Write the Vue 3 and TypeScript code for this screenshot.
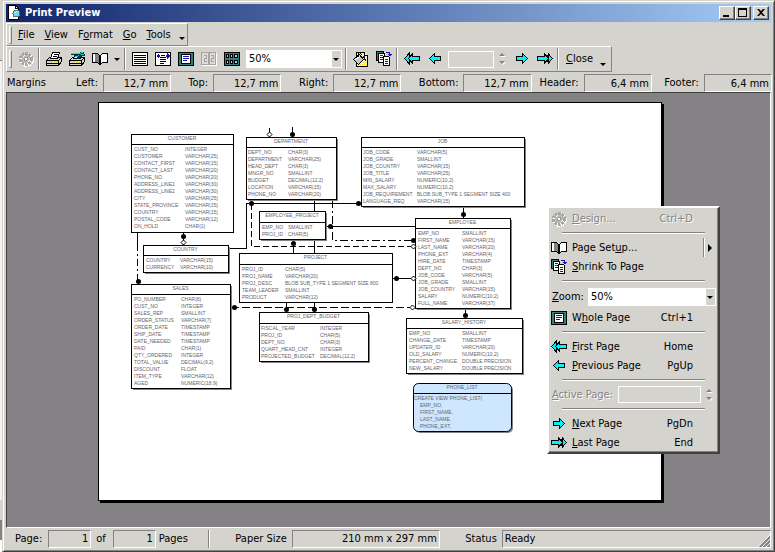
<script setup lang="ts">
import { ref } from 'vue'

type Row = [string, string?]
interface Entity {
  name: string
  x: number
  y: number
  w: number
  h: number
  head: number
  c1: number
  c2: number
  rows: Row[]
  view?: boolean
  shadow?: boolean
}

const zoom = ref('50%')
const zoomLevels = ['25%', '50%', '75%', '100%', '200%']

const margins = ref([
  { id: 'left', label: 'Left:', value: '12,7 mm' },
  { id: 'top', label: 'Top:', value: '12,7 mm' },
  { id: 'right', label: 'Right:', value: '12,7 mm' },
  { id: 'bottom', label: 'Bottom:', value: '12,7 mm' },
  { id: 'header', label: 'Header:', value: '6,4 mm' },
  { id: 'footer', label: 'Footer:', value: '6,4 mm' },
])

const menus = [
  ['', 'F', 'ile'],
  ['', 'V', 'iew'],
  ['F', 'o', 'rmat'],
  ['', 'G', 'o'],
  ['', 'T', 'ools'],
]

const viewTools = [
  { icon: 'lines', label: 'Actual size' },
  { icon: 'fit', label: 'Page width' },
  { icon: 'whole', label: 'Whole page' },
  { icon: 'two', label: 'Two pages', off: true },
  { icon: 'multi', label: 'Many pages' },
]

const entities: Entity[] = [
  {
    name: 'CUSTOMER', x: 131, y: 134, w: 102, h: 98, head: 10, c1: 134, c2: 185,
    rows: [['CUST_NO', 'INTEGER'], ['CUSTOMER', 'VARCHAR(25)'], ['CONTACT_FIRST', 'VARCHAR(15)'], ['CONTACT_LAST', 'VARCHAR(20)'], ['PHONE_NO', 'VARCHAR(20)'], ['ADDRESS_LINE1', 'VARCHAR(30)'], ['ADDRESS_LINE2', 'VARCHAR(30)'], ['CITY', 'VARCHAR(25)'], ['STATE_PROVINCE', 'VARCHAR(15)'], ['COUNTRY', 'VARCHAR(15)'], ['POSTAL_CODE', 'VARCHAR(12)'], ['ON_HOLD', 'CHAR(1)']],
  },
  {
    name: 'DEPARTMENT', x: 246, y: 137, w: 90, h: 62, head: 10, c1: 248, c2: 288, shadow: true,
    rows: [['DEPT_NO', 'CHAR(3)'], ['DEPARTMENT', 'VARCHAR(25)'], ['HEAD_DEPT', 'CHAR(3)'], ['MNGR_NO', 'SMALLINT'], ['BUDGET', 'DECIMAL(12,2)'], ['LOCATION', 'VARCHAR(15)'], ['PHONE_NO', 'VARCHAR(20)']],
  },
  {
    name: 'JOB', x: 361, y: 137, w: 163, h: 69, head: 10, c1: 363, c2: 417, shadow: true,
    rows: [['JOB_CODE', 'VARCHAR(5)'], ['JOB_GRADE', 'SMALLINT'], ['JOB_COUNTRY', 'VARCHAR(15)'], ['JOB_TITLE', 'VARCHAR(25)'], ['MIN_SALARY', 'NUMERIC(10,2)'], ['MAX_SALARY', 'NUMERIC(10,2)'], ['JOB_REQUIREMENT', 'BLOB SUB_TYPE 1 SEGMENT SIZE 400'], ['LANGUAGE_REQ', 'VARCHAR(15)']],
  },
  {
    name: 'EMPLOYEE_PROJECT', x: 259, y: 211, w: 66, h: 28, head: 11, c1: 262, c2: 288, shadow: true,
    rows: [['EMP_NO', 'SMALLINT'], ['PROJ_ID', 'CHAR(5)']],
  },
  {
    name: 'COUNTRY', x: 143, y: 245, w: 85, h: 27, head: 10, c1: 146, c2: 180, shadow: true,
    rows: [['COUNTRY', 'VARCHAR(15)'], ['CURRENCY', 'VARCHAR(10)']],
  },
  {
    name: 'SALES', x: 131, y: 284, w: 99, h: 104, head: 10, c1: 134, c2: 181, shadow: true,
    rows: [['PO_NUMBER', 'CHAR(8)'], ['CUST_NO', 'INTEGER'], ['SALES_REP', 'SMALLINT'], ['ORDER_STATUS', 'VARCHAR(7)'], ['ORDER_DATE', 'TIMESTAMP'], ['SHIP_DATE', 'TIMESTAMP'], ['DATE_NEEDED', 'TIMESTAMP'], ['PAID', 'CHAR(1)'], ['QTY_ORDERED', 'INTEGER'], ['TOTAL_VALUE', 'DECIMAL(9,2)'], ['DISCOUNT', 'FLOAT'], ['ITEM_TYPE', 'VARCHAR(12)'], ['AGED', 'NUMERIC(18,9)']],
  },
  {
    name: 'PROJECT', x: 239, y: 253, w: 153, h: 49, head: 11, c1: 242, c2: 285,
    rows: [['PROJ_ID', 'CHAR(5)'], ['PROJ_NAME', 'VARCHAR(20)'], ['PROJ_DESC', 'BLOB SUB_TYPE 1 SEGMENT SIZE 800'], ['TEAM_LEADER', 'SMALLINT'], ['PRODUCT', 'VARCHAR(12)']],
  },
  {
    name: 'PROJ_DEPT_BUDGET', x: 259, y: 312, w: 109, h: 49, head: 11, c1: 261, c2: 320, shadow: true,
    rows: [['FISCAL_YEAR', 'INTEGER'], ['PROJ_ID', 'CHAR(5)'], ['DEPT_NO', 'CHAR(3)'], ['QUART_HEAD_CNT', 'INTEGER'], ['PROJECTED_BUDGET', 'DECIMAL(12,2)']],
  },
  {
    name: 'EMPLOYEE', x: 415, y: 218, w: 95, h: 90, head: 10, c1: 418, c2: 462, shadow: true,
    rows: [['EMP_NO', 'SMALLINT'], ['FIRST_NAME', 'VARCHAR(15)'], ['LAST_NAME', 'VARCHAR(20)'], ['PHONE_EXT', 'VARCHAR(4)'], ['HIRE_DATE', 'TIMESTAMP'], ['DEPT_NO', 'CHAR(3)'], ['JOB_CODE', 'VARCHAR(5)'], ['JOB_GRADE', 'SMALLINT'], ['JOB_COUNTRY', 'VARCHAR(15)'], ['SALARY', 'NUMERIC(10,2)'], ['FULL_NAME', 'VARCHAR(37)']],
  },
  {
    name: 'SALARY_HISTORY', x: 406, y: 318, w: 116, h: 55, head: 10, c1: 409, c2: 462, shadow: true,
    rows: [['EMP_NO', 'SMALLINT'], ['CHANGE_DATE', 'TIMESTAMP'], ['UPDATER_ID', 'VARCHAR(20)'], ['OLD_SALARY', 'NUMERIC(10,2)'], ['PERCENT_CHANGE', 'DOUBLE PRECISION'], ['NEW_SALARY', 'DOUBLE PRECISION']],
  },
  {
    name: 'PHONE_LIST', x: 413, y: 383, w: 98, h: 48, head: 10, c1: 414, c2: 420, view: true, shadow: true,
    rows: [['CREATE VIEW PHONE_LIST('], ['', 'EMP_NO,'], ['', 'FIRST_NAME,'], ['', 'LAST_NAME,'], ['', 'PHONE_EXT,']],
  },
]

const links: { d: string; dash?: string }[] = [
  { d: 'M269.5 128V138' },
  { d: 'M292.5 127V138' },
  { d: 'M183.5 233V246' },
  { d: 'M137.5 233V244' },
  { d: 'M137.5 244V284', dash: '7 3 2 3' },
  { d: 'M229 248.5H246.5V203.5H361' },
  { d: 'M251.5 204V246.5H412', dash: '6 3' },
  { d: 'M332.5 200V240.5H412', dash: '8 3 2 3' },
  { d: 'M314.5 200V312' },
  { d: 'M326 226.5H415' },
  { d: 'M293.5 239V253' },
  { d: 'M286.5 302V312' },
  { d: 'M463.5 207V218' },
  { d: 'M393 278.5H412' },
  { d: 'M231 307.5H411', dash: '8 3' },
  { d: 'M465.5 309V318' },
]
const dots = [[292, 134], [183, 236], [138, 281], [251, 203], [358, 203], [413, 240], [330, 226], [293, 243], [286, 309], [314, 309], [463, 214], [396, 278], [234, 307], [465, 315]]
const diamonds = [[269, 134], [183, 242], [413, 246], [413, 278], [412, 307]]
</script>

<template>
  <div class="desktop">
    <svg class="defs" aria-hidden="true">
      <symbol id="i-app" viewBox="0 0 16 16">
        <path d="M1.500 .5h7l3 3v11h-10z" fill="#fff" stroke="#000" />
        <path d="M8.500 .5v3h3" fill="none" stroke="#000" />
        <circle cx="9.500" cy="8.500" r="3.500" fill="#6fd8e6" stroke="#5d6b78" />
        <path d="M12 11.500l3 3.500" stroke="#27313b" stroke-width="2" />
        <path d="M8 7.500l2-1" stroke="#fff" />
      </symbol>
      <symbol id="i-gear" viewBox="0 0 16 16">
        <circle cx="9" cy="9" r="5" fill="none" stroke="#fff" stroke-width="4" stroke-dasharray="3 1" />
        <circle cx="8" cy="8" r="5.500" fill="none" stroke="#a9a7a6" stroke-width="3" stroke-dasharray="2.500 1" />
        <circle cx="8" cy="8" r="4.500" fill="#bdbbb8" stroke="#a5a3a3" stroke-dasharray="2 1" />
        <circle cx="8" cy="8" r="1.500" fill="#fff" stroke="#96949a" />
        <path d="M5 6l2-2M10 11l2-2" stroke="#fff" />
      </symbol>
      <symbol id="i-printer" viewBox="0 0 16 16">
        <path d="M4.500 8l2-6.500h7L11.500 8z" fill="#fff" stroke="#000" />
        <path d="M7.500 3.500h4M7 5.500h4" stroke="#000" />
        <path d="M.5 9.500l3-3h1v1h7v-1h4v4l-3 4H.5z" fill="#d5d3ce" stroke="#000" />
        <path d="M1 9.500h11.500v5M12.500 9.500l3-3M1 12.500h11" fill="none" stroke="#000" />
        <path d="M7 11.500h4" stroke="#efe73a" />
      </symbol>
      <symbol id="i-printset" viewBox="0 0 16 16">
        <path d="M4.500 8l2-5.500h7L11.500 8z" fill="#fff" stroke="#000" />
        <path d="M.5 9.500l3-3h1v1h7v-1h4v4l-3 4H.5z" fill="#d5d3ce" stroke="#000" />
        <path d="M1 9.500h11.500v5M12.500 9.500l3-3M1 12.500h11" fill="none" stroke="#000" />
        <path d="M7 11.500h4" stroke="#efe73a" />
        <path d="M2 2.500h9M11 1.500h4M11 3.500h5M5 4.500h7l-4 3" fill="none" stroke="#00393c" stroke-width="2" />
        <path d="M2 2.500h10M12 1.500h2M12 3.500h3M10 4.500l-5 2" fill="none" stroke="#00e5ea" />
      </symbol>
      <symbol id="i-book" viewBox="0 0 16 16">
        <path d="M.5 2.500h5l2 2v9l-2-2h-5z" fill="#848284" stroke="#000" />
        <path d="M2 3v8" stroke="#fff" stroke-width="2" />
        <path d="M8.500 4.500l2-2h5v9h-5l-2 2z" fill="#fff" stroke="#000" />
        <path d="M7.500 4v9" stroke="#000" />
      </symbol>
      <symbol id="i-lines" viewBox="0 0 16 16">
        <path d="M.5 1.500h15v13H.5z" fill="#fff" stroke="#000" />
        <path d="M2 4.500h12M2 6.500h12M2 8.500h12M2 10.500h12M2 12.500h12" stroke="#000" />
      </symbol>
      <symbol id="i-fit" viewBox="0 0 16 16">
        <path d="M.5 1.500h15v13H.5z" fill="#fff" stroke="#000" />
        <path d="M6 4.500h4M5 6.500h6M5 8.500h6M5 10.500h6M5 12.500h4" stroke="#000" />
        <path d="M1 5l3-3v2h1v2H4v2zM15 5l-3-3v2h-1v2h1v2z" fill="#1414b8" />
      </symbol>
      <symbol id="i-whole" viewBox="0 0 16 16">
        <path d="M.5 1.500h15v13H.5z" fill="#2f7f7f" stroke="#000" />
        <path d="M3.500 3.500h9v9h-9z" fill="#fff" stroke="#000" />
        <path d="M5 5.500h6M5 7.500h6M5 9.500h4" stroke="#1414b8" />
      </symbol>
      <symbol id="i-two" viewBox="0 0 16 16">
        <path d="M1.500 2.500h14v12h-14z" fill="none" stroke="#fff" />
        <path d="M.5 1.500h7v12h-7zM8.500 1.500h6v12h-6z" fill="#dddbd7" stroke="#a5a3a3" />
        <path d="M3 4.500h2.500v3H3.500v3H6M10 4.500h2.500v3h-2v3H13" fill="none" stroke="#a5a3a3" />
      </symbol>
      <symbol id="i-multi" viewBox="0 0 16 16">
        <path d="M.5 1.500h15v13H.5z" fill="#2f7f7f" stroke="#000" />
        <path d="M2.500 3.500h2v3h-2zM6.500 3.500h2v3h-2zM10.500 3.500h3v3h-3zM2.500 9.500h2v3h-2zM6.500 9.500h2v3h-2zM10.500 9.500h3v3h-3z" fill="#a9cfcf" stroke="#000" />
      </symbol>
      <symbol id="i-paint" viewBox="0 0 16 16">
        <path d="M3.500 1.500h8l3 3v11h-11z" fill="#fdf7a0" stroke="#000" />
        <path d="M9 13.500h5M10 11.500h4M5 13.500h6" stroke="#f3dc1c" stroke-dasharray="1 1" />
        <path d="M11.500 1.500v3h3" fill="#fff" stroke="#000" />
        <path d="M.5 8.500l6-5 4 5-5 5z" fill="#c9c7c6" stroke="#000" />
        <path d="M2 9l5-4" stroke="#fff" />
        <path d="M5.500 6V1.500h2l1 3" fill="none" stroke="#000" />
        <path d="M9 4.500c3 0 4 2 3.500 6l-2-3z" fill="#14148c" />
      </symbol>
      <symbol id="i-shrink" viewBox="0 0 16 16">
        <path d="M.5 .5h7v9h-7z" fill="#2f7f7f" stroke="#000" />
        <path d="M2.500 2.500h6v9h-6z" fill="#fff" stroke="#000" />
        <path d="M4 4.500h3M4 6.500h3M4 8.500h3" stroke="#1414b8" />
        <path d="M7.500 5.500h5l1 1v8h-6z" fill="#fff" stroke="#000" />
        <path d="M9 8.500h3M9 10.500h3M9 12.500h3" stroke="#1414b8" />
        <path d="M10 1.500h3l1 2M12 3.500h4M13 4.500h2" fill="none" stroke="#1414b8" />
      </symbol>
      <symbol id="i-prev" viewBox="0 0 16 16">
        <path d="M2.500 7.500l5-5v3h6v4h-6v3z" fill="#00f5f8" stroke="#000" />
      </symbol>
      <symbol id="i-first" viewBox="0 0 16 16">
        <path d="M.5 7.500l4.500-5v3l3.500-3v3h7v4h-7v3L5 9.500v3z" fill="#00f5f8" stroke="#000" />
        <path d="M8.500 3l-4 4.500 4 4.500" fill="none" stroke="#000" />
      </symbol>
      <symbol id="i-next" viewBox="0 0 16 16">
        <path d="M13.500 7.500l-5-5v3h-6v4h6v3z" fill="#00f5f8" stroke="#000" />
      </symbol>
      <symbol id="i-last" viewBox="0 0 16 16">
        <path d="M15.500 7.500l-4.500-5v3l-3.500-3v3h-7v4h7v3L11 9.500v3z" fill="#00f5f8" stroke="#000" />
        <path d="M7.500 3l4 4.500-4 4.500" fill="none" stroke="#000" />
      </symbol>
      <symbol id="i-spin" viewBox="0 0 7 14">
        <path d="M1 5h6l-3-3zM1 10h6l-3 3z" fill="#fff" />
        <path d="M0 4h6L3 1zM0 9h6l-3 3z" fill="#848284" />
      </symbol>
    </svg>

    <div class="behind"></div>

    <main class="window">
      <header class="titlebar">
        <svg class="icon"><use href="#i-app" /></svg>
        <h1>Print Preview</h1>
        <div class="winbtns">
          <button type="button" aria-label="Minimize">
            <svg viewBox="0 0 12 10"><path d="M2 7h6v2H2z" /></svg>
          </button>
          <button type="button" aria-label="Maximize">
            <svg viewBox="0 0 12 10"><path d="M1 0h9v9H1zM2 2v6h7V2z" fill-rule="evenodd" /></svg>
          </button>
          <button type="button" aria-label="Close window" class="x">
            <svg viewBox="0 0 12 10"><path d="M2 1h2l2 2 2-2h2L7 4.500 10 8H8L6 6 4 8H2l3-3.500z" /></svg>
          </button>
        </div>
      </header>

      <nav class="bar menubar">
        <i class="grip"></i>
        <button v-for="m in menus" :key="m.join('')" type="button" class="menu">{{ m[0] }}<u>{{ m[1] }}</u>{{ m[2] }}</button>
        <i class="tri more"></i>
      </nav>

      <div class="bar toolbar">
        <i class="grip"></i>
        <button type="button" class="tool" aria-label="Design" disabled><svg class="icon"><use href="#i-gear" /></svg></button>
        <i class="sep"></i>
        <button type="button" class="tool" aria-label="Print"><svg class="icon"><use href="#i-printer" /></svg></button>
        <button type="button" class="tool" aria-label="Print setup"><svg class="icon"><use href="#i-printset" /></svg></button>
        <button type="button" class="tool" aria-label="Page setup"><svg class="icon"><use href="#i-book" /></svg></button>
        <button type="button" class="drop" aria-label="Page setup options"><i class="tri"></i></button>
        <i class="sep"></i>
        <button v-for="t in viewTools" :key="t.icon" type="button" class="tool" :aria-label="t.label" :disabled="t.off">
          <svg class="icon"><use :href="'#i-' + t.icon" /></svg>
        </button>
        <span class="combo">
          <select v-model="zoom" aria-label="Zoom">
            <option v-for="z in zoomLevels" :key="z">{{ z }}</option>
          </select>
        </span>
        <i class="sep"></i>
        <button type="button" class="tool" aria-label="Background"><svg class="icon"><use href="#i-paint" /></svg></button>
        <button type="button" class="tool" aria-label="Shrink to page"><svg class="icon"><use href="#i-shrink" /></svg></button>
        <i class="sep"></i>
        <button type="button" class="tool" aria-label="First page"><svg class="icon"><use href="#i-first" /></svg></button>
        <button type="button" class="tool" aria-label="Previous page"><svg class="icon"><use href="#i-prev" /></svg></button>
        <input class="pagebox" aria-label="Active page" disabled />
        <svg class="spin"><use href="#i-spin" /></svg>
        <button type="button" class="tool" aria-label="Next page"><svg class="icon"><use href="#i-next" /></svg></button>
        <button type="button" class="tool" aria-label="Last page"><svg class="icon"><use href="#i-last" /></svg></button>
        <i class="sep"></i>
        <button type="button" class="closebtn"><u>C</u>lose</button>
        <i class="tri more"></i>
      </div>

      <div class="margins">
        <span class="caption">Margins</span>
        <template v-for="m in margins" :key="m.id">
          <label :for="m.id">{{ m.label }}</label>
          <input :id="m.id" v-model="m.value" class="sunk" />
        </template>
      </div>

      <section class="workspace">
        <div class="page">
          <svg class="diagram" viewBox="99 103 562 397" role="img" aria-label="Database diagram">
            <path v-for="l in links" :key="l.d" :d="l.d" class="link" :stroke-dasharray="l.dash" />
            <g v-for="e in entities" :key="e.name">
              <rect v-if="e.shadow" :x="e.x + 2" :y="e.y + 2" :width="e.w" :height="e.h" :rx="e.view ? 5 : 0" class="shade" />
              <rect :x="e.x + 0.5" :y="e.y + 0.5" :width="e.w" :height="e.h" :rx="e.view ? 5 : 0" class="box" :class="{ view: e.view }" />
              <path :d="`M${e.x} ${e.y + e.head + 0.5}h${e.w}`" class="link" />
              <text :x="e.x + e.w / 2" :y="e.y + 6" text-anchor="middle">{{ e.name }}</text>
              <template v-for="(r, i) in e.rows" :key="i">
                <text v-if="r[0]" :x="e.c1" :y="e.y + e.head + 7 + i * 7">{{ r[0] }}</text>
                <text v-if="r[1]" :x="e.c2" :y="e.y + e.head + 7 + i * 7">{{ r[1] }}</text>
              </template>
            </g>
            <circle v-for="d in dots" :key="d.join()" :cx="d[0] + 0.5" :cy="d[1] + 0.5" r="2.500" />
            <path v-for="d in diamonds" :key="d.join()" :d="`M${d[0] - 2} ${d[1] + 0.5}l2.500-2.500 2.500 2.500-2.500 2.500z`" class="diamond" />
          </svg>
        </div>
      </section>

      <footer class="status">
        <label for="pg">Page:</label>
        <output id="pg" class="sunk num">1</output>
        <span>of</span>
        <output class="sunk num total">1</output>
        <span class="pages">Pages</span>
        <i class="sep"></i>
        <label for="paper" class="paper">Paper Size</label>
        <output id="paper" class="sunk size">210 mm x 297 mm</output>
        <label for="state" class="state">Status</label>
        <output id="state" class="sunk ready">Ready
          <svg class="sizer" viewBox="0 0 12 12"><path d="M0 12L12 0M4 12l8-8M8 12l4-4" stroke="#fff" /><path d="M1.500 12.500l11-11M5.500 12.500l8-8M9.500 12.500l4-4" stroke="#848284" stroke-width="2" /></svg>
        </output>
      </footer>

      <div class="popup">
        <button type="button" class="item" disabled><svg class="icon"><use href="#i-gear" /></svg><span><u>D</u>esign...</span><kbd>Ctrl+D</kbd></button>
        <hr />
        <button type="button" class="item sub"><svg class="icon"><use href="#i-book" /></svg><span>Page Set<u>u</u>p...</span><i class="go"></i></button>
        <button type="button" class="item"><svg class="icon"><use href="#i-shrink" /></svg><span><u>S</u>hrink To Page</span></button>
        <hr />
        <div class="row zoomrow">
          <label for="mzoom"><u>Z</u>oom:</label>
          <span class="combo">
            <select id="mzoom" v-model="zoom">
              <option v-for="z in zoomLevels" :key="z">{{ z }}</option>
            </select>
          </span>
        </div>
        <button type="button" class="item"><svg class="icon"><use href="#i-whole" /></svg><span>W<u>h</u>ole Page</span><kbd>Ctrl+1</kbd></button>
        <hr />
        <button type="button" class="item"><svg class="icon"><use href="#i-first" /></svg><span><u>F</u>irst Page</span><kbd>Home</kbd></button>
        <button type="button" class="item"><svg class="icon"><use href="#i-prev" /></svg><span><u>P</u>revious Page</span><kbd>PgUp</kbd></button>
        <hr />
        <div class="row">
          <label for="active" class="off"><u>A</u>ctive Page:</label>
          <input id="active" class="pagebox" disabled />
          <svg class="spin"><use href="#i-spin" /></svg>
        </div>
        <hr />
        <button type="button" class="item"><svg class="icon"><use href="#i-next" /></svg><span><u>N</u>ext Page</span><kbd>PgDn</kbd></button>
        <button type="button" class="item"><svg class="icon"><use href="#i-last" /></svg><span><u>L</u>ast Page</span><kbd>End</kbd></button>
      </div>
    </main>
  </div>
</template>

<style>
body {
  background: #d5d3ce;
}
</style>

<style scoped>
.desktop,
.desktop * {
  box-sizing: border-box;
}
.desktop {
  min-height: 100vh;
  display: flex;
  color: #000;
  font: 11px/14px "DejaVu Sans Condensed", "Liberation Sans", sans-serif;
}
button,
input,
select,
kbd,
h1 {
  font: inherit;
  color: inherit;
  margin: 0;
  padding: 0;
  border: 0;
  border-radius: 0;
  background: none;
}
svg {
  display: block;
}
u {
  text-underline-offset: 1px;
}
.defs {
  position: absolute;
  width: 0;
  height: 0;
}
.behind {
  width: 2px;
  background: linear-gradient(#d5d3ce 60px, #848284 60px, #848284 61px, #f4f3f1 61px, #f4f3f1 500px, #d5d3ce 500px, #d5d3ce 520px, #848284 520px, #848284 540px, #fff 540px);
}
.window {
  position: relative;
  flex: 1;
  min-width: 0;
  display: flex;
  flex-direction: column;
  padding: 2px;
  background: #d5d3ce;
  border: 1px solid #424142;
  border-left-color: #d5d3ce;
  border-top-color: #d5d3ce;
  box-shadow: inset 1px 1px #fff, inset -1px -1px #848284;
}
.icon {
  width: 16px;
  height: 16px;
  flex: none;
  shape-rendering: crispEdges;
}

.titlebar {
  height: 18px;
  margin: 1px;
  padding: 0 2px 0 1px;
  display: flex;
  align-items: center;
  gap: 2px;
  color: #fff;
  background: linear-gradient(90deg, #10246b, #a5cbf7);
}
.titlebar h1 {
  flex: 1;
  font-weight: bold;
}
.winbtns {
  display: flex;
}
.winbtns button {
  width: 16px;
  height: 14px;
  padding: 1px;
  background: #d5d3ce;
  border: 1px solid;
  border-color: #fff #424142 #424142 #fff;
  box-shadow: inset -1px -1px #848284;
}
.winbtns .x {
  margin-left: 2px;
}
.winbtns svg {
  width: 12px;
  height: 10px;
}

.bar {
  align-self: flex-start;
  display: flex;
  align-items: center;
  margin-left: 1px;
  padding-left: 2px;
  border: 1px solid;
  border-color: #fff #848284 #848284 #fff;
}
.menubar {
  height: 23px;
  padding-top: 1px;
}
.toolbar {
  height: 26px;
  padding-right: 3px;
}
.grip {
  width: 3px;
  height: 18px;
  margin-right: 2px;
  border: 1px solid;
  border-color: #fff #848284 #848284 #fff;
}
.menubar .grip {
  margin-right: 1px;
}
.menu {
  padding: 0 5px;
}
.tri {
  border: 3px solid transparent;
  border-top-color: #000;
  border-bottom: 0;
}
.more {
  align-self: flex-end;
  margin: 0 2px 5px 3px;
}
.tool {
  width: 23px;
  height: 22px;
  display: flex;
  align-items: center;
  justify-content: center;
}
.drop {
  width: 12px;
  height: 22px;
  display: flex;
  align-items: center;
  justify-content: center;
}
.sep {
  width: 2px;
  height: 22px;
  margin: 0 2px 0 1px;
  background: linear-gradient(90deg, #848284 50%, #fff 50%);
}
.combo {
  position: relative;
  display: flex;
  width: 96px;
  height: 18px;
  margin: 0 2px 0 3px;
  background: #fff;
  border: 1px solid #fff;
}
.combo select {
  appearance: none;
  flex: 1;
  width: 100%;
  padding: 0 12px 0 2px;
  outline: 0;
}
.combo::before {
  content: "";
  position: absolute;
  inset: 0 0 0 auto;
  width: 9px;
  background: #d5d3ce;
  pointer-events: none;
}
.combo::after {
  content: "";
  position: absolute;
  right: 2px;
  top: 7px;
  border: 3px solid transparent;
  border-top-color: #000;
  border-bottom: 0;
  pointer-events: none;
}
.pagebox {
  width: 46px;
  height: 17px;
  margin-left: 2px;
  border: 1px solid #fff;
}
.spin {
  width: 7px;
  height: 14px;
  margin: 0 4px 0 5px;
}
.closebtn {
  padding: 0 4px 0 5px;
}

.margins {
  display: grid;
  grid-template-columns: 57px 40px minmax(0, 1fr) 42px minmax(0, 1fr) 52px minmax(0, 1fr) 62px minmax(0, 1fr) 52px minmax(0, 1fr) 52px minmax(0, 1fr);
  align-items: center;
  margin: 2px 0 0 1px;
}
.caption {
  padding-left: 1px;
}
.margins label {
  text-align: right;
  padding-right: 5px;
}
.sunk {
  min-width: 0;
  width: 100%;
  height: 18px;
  padding: 1px 2px 0 2px;
  text-align: right;
  border: 1px solid;
  border-color: #848284 #fff #fff #848284;
}

.workspace {
  flex: 1;
  display: flex;
  align-items: flex-start;
  margin: 0 1px;
  padding: 9px 20px 24px 91px;
  overflow: hidden;
  background: #848284;
  border: 1px solid;
  border-color: #424142 #fff #fff #424142;
}
.page {
  flex: none;
  background: #fff;
  border: 1px solid #000;
  box-shadow: 2px 2px #000;
}
.diagram {
  width: 562px;
  height: 397px;
  font: 5px "Liberation Sans", sans-serif;
}
.diagram text {
  fill: #66646a;
}
.link {
  fill: none;
  stroke: #000;
  shape-rendering: crispEdges;
}
.box {
  fill: #fff;
  stroke: #000;
}
.view {
  fill: #cee7ff;
}
.shade {
  fill: #848284;
}
.diamond {
  fill: #fff;
  stroke: #000;
}

.status {
  display: flex;
  align-items: center;
  margin: 2px 1px 1px 0;
  padding-left: 10px;
}
.status .sunk {
  display: block;
}
.status .num {
  flex: none;
  width: 43px;
  margin: 0 5px 0 6px;
}
.status .total {
  margin: 0 3px 0 7px;
}
.status .pages {
  width: 49px;
}
.status .sep {
  height: 18px;
  margin: 0;
}
.status .paper {
  width: 82px;
  padding-right: 5px;
  text-align: right;
}
.status .size {
  flex: none;
  width: 148px;
}
.status .state {
  width: 62px;
  flex: none;
  padding-right: 5px;
  text-align: right;
}
.status .ready {
  flex: 1;
  position: relative;
  padding: 1px 2px 0;
  text-align: left;
}
.sizer {
  position: absolute;
  right: 0;
  bottom: 0;
  width: 12px;
  height: 12px;
}

.popup {
  position: absolute;
  left: 544px;
  top: 205px;
  width: 173px;
  padding: 1px 1px 0;
  background: #d5d3ce;
  border: 2px solid;
  border-color: #fff #424142 #424142 #fff;
  box-shadow: inset -1px -1px #848284;
}
.item {
  display: flex;
  align-items: center;
  width: 100%;
  height: 19px;
  padding: 0 24px 0 1px;
  text-align: left;
}
.item .icon {
  margin-right: 5px;
}
.item kbd {
  margin-left: auto;
}
.item:disabled,
.off {
  color: #848284;
  text-shadow: 1px 1px #fff;
}
.sub {
  padding-right: 5px;
}
.go {
  display: flex;
  align-items: center;
  height: 19px;
  margin-left: auto;
  padding-left: 4px;
  border-left: 1px solid #848284;
  box-shadow: inset 1px 0 #fff;
}
.go::after {
  content: "";
  border: 4px solid transparent;
  border-left-color: #000;
  border-right: 0;
}
hr {
  height: 2px;
  margin: 4px 12px;
  border: 0;
  background: linear-gradient(#848284 50%, #fff 50%);
}
.row {
  display: flex;
  align-items: center;
  height: 19px;
  padding-left: 2px;
}
.zoomrow {
  height: 22px;
}
.row .combo {
  flex: 1;
  margin: 0 1px 0 4px;
}
.row .pagebox {
  flex: 1;
  min-width: 0;
  margin-left: 5px;
}
</style>
